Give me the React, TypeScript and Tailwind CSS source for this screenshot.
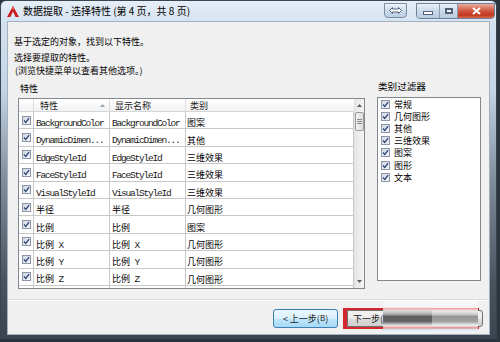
import React from 'react'

const cjk = "font-['Noto_Sans_CJK_SC','Microsoft_YaHei',sans-serif]"
const mono = "font-['Liberation_Mono','Noto_Sans_CJK_SC',monospace]"

const rows: [string, string, string][] = [
  ['BackgroundColor', 'BackgroundColor', '图案'],
  ['DynamicDimen...', 'DynamicDimen...', '其他'],
  ['EdgeStyleId', 'EdgeStyleId', '三维效果'],
  ['FaceStyleId', 'FaceStyleId', '三维效果'],
  ['VisualStyleId', 'VisualStyleId', '三维效果'],
  ['半径', '半径', '几何图形'],
  ['比例', '比例', '图案'],
  ['比例 X', '比例 X', '几何图形'],
  ['比例 Y', '比例 Y', '几何图形'],
  ['比例 Z', '比例 Z', '几何图形'],
  ['', '', ''],
]

const filters = ['常规', '几何图形', '其他', '三维效果', '图案', '图形', '文本']

/** ASCII runs get the narrow mono face, CJK stays full width */
function CellText({ text }: { text: string }) {
  const parts = text.split(/([\x20-\x7e]+)/).filter(Boolean)
  return (
    <span className="whitespace-pre leading-none">
      {parts.map((p, i) =>
        /^[\x20-\x7e]+$/.test(p) ? (
          <span key={i} className={`${mono} text-[9.5px] tracking-[-1.2px] text-[#1a1a1a]`}>
            {p}
          </span>
        ) : (
          <span key={i} className={`${cjk} text-[9px]`}>
            {p}
          </span>
        )
      )}
    </span>
  )
}

function Check() {
  return (
    <span className="inline-flex w-[9px] h-[9px] shrink-0 items-center justify-center border border-[#8c96a8] bg-[linear-gradient(135deg,#cfd8e4,#f3f5f8)]">
      <svg width="7" height="7" viewBox="0 0 7 7">
        <path d="M1 3.6 L2.8 5.4 L6.1 1.1" stroke="#34497a" strokeWidth="1.4" fill="none" />
      </svg>
    </span>
  )
}

function AcadIcon() {
  return (
    <svg width="12" height="11" viewBox="0 0 12 11">
      <polygon points="6,0 12,11 8.6,11 6,5.6 3.4,11 0,11" fill="#c81e1e" />
      <polygon points="6,0 7.2,2.2 6,4.4 4.8,2.2" fill="#e85a4a" />
    </svg>
  )
}

function TitleButtons() {
  return (
    <div className="flex items-start ml-auto -mt-[1px]">
      <div className="w-[23px] h-[15px] mr-[9px] rounded-b-[4px] border border-[#7c8ca3] bg-[linear-gradient(to_bottom,#eef3f9,#cddbeb_50%,#bccfe4)] flex items-center justify-center">
        <svg width="13" height="7" viewBox="0 0 13 7">
          <path
            d="M0.5 3.5 L3.5 0.5 L3.5 2 L9.5 2 L9.5 0.5 L12.5 3.5 L9.5 6.5 L9.5 5 L3.5 5 L3.5 6.5 Z"
            fill="#ffffff"
            stroke="#4a5870"
            strokeWidth="0.9"
            strokeLinejoin="round"
          />
        </svg>
      </div>
      <div className="flex h-[16px] rounded-b-[4px] border border-[#6f7f96] overflow-hidden">
        <div className="w-[23px] bg-[linear-gradient(to_bottom,#eaf1f8,#cbd9ea_50%,#b8cbe0)] flex items-end justify-center pb-[3px] border-r border-[#8c9bb0]">
          <span className="w-[8px] h-[2px] bg-white border border-[#53627a] box-content" />
        </div>
        <div className="w-[18px] bg-[linear-gradient(to_bottom,#eaf1f8,#cbd9ea_50%,#b8cbe0)] flex items-center justify-center border-r border-[#8c9bb0]">
          <span className="w-[8px] h-[6px] border-2 border-[#53627a] bg-white/70" />
        </div>
        <div className="w-[36px] bg-[linear-gradient(to_bottom,#ebab9c,#d0543e_50%,#c1391f_80%,#d96a4c)] flex items-center justify-center">
          <svg width="9" height="8" viewBox="0 0 9 8">
            <path d="M1 1 L8 7 M8 1 L1 7" stroke="#ffffff" strokeWidth="2" />
          </svg>
        </div>
      </div>
    </div>
  )
}

function PropTable() {
  return (
    <div className="w-[347px] h-[191px] border border-[#828790] bg-white flex overflow-hidden">
      <div className="w-[335px] flex flex-col">
        {/* header */}
        <div className="flex h-[13px] shrink-0 border-b border-[#d5d5d5] bg-[linear-gradient(to_bottom,#ffffff,#f1f2f4)] text-[#1e1e1e]">
          <div className="w-[15px] border-r border-[#dcdcdc]" />
          <div className={`w-[76px] border-r border-[#dcdcdc] flex items-center pl-[6px] ${cjk} text-[9px] leading-none`}>
            <span>特性</span>
            <svg className="ml-auto mr-[4px]" width="5" height="3" viewBox="0 0 5 3">
              <polygon points="2.5,0 5,3 0,3" fill="#9aa3b0" />
            </svg>
          </div>
          <div className={`w-[76px] border-r border-[#dcdcdc] flex items-center pl-[5px] ${cjk} text-[9px] leading-none`}>
            显示名称
          </div>
          <div className={`w-[168px] flex items-center pl-[4px] ${cjk} text-[9px] leading-none`}>类别</div>
        </div>
        {rows.map((r, i) => (
          <div key={i} className="flex h-[17.4px] shrink-0 border-b border-[#c8c8c8] text-black">
            <div className="w-[15px] border-r border-[#c8c8c8] flex items-center justify-center">
              {r[0] && <Check />}
            </div>
            <div className="w-[76px] border-r border-[#c8c8c8] flex items-center pl-[2px] whitespace-nowrap overflow-hidden">
              <CellText text={r[0]} />
            </div>
            <div className="w-[76px] border-r border-[#c8c8c8] flex items-center pl-[2px] whitespace-nowrap overflow-hidden">
              <CellText text={r[1]} />
            </div>
            <div className="w-[168px] border-r border-[#c8c8c8] flex items-center pl-[1px]">
              <CellText text={r[2]} />
            </div>
          </div>
        ))}
      </div>
      {/* scrollbar */}
      <div className="w-[11px] flex flex-col bg-[linear-gradient(to_right,#e6e6e6,#f4f4f4)] border-l border-[#e2e2e2]">
        <div className="h-[13px] flex items-center justify-center">
          <svg width="5" height="3" viewBox="0 0 5 3">
            <polygon points="2.5,0 5,3 0,3" fill="#5a5a5a" />
          </svg>
        </div>
        <div className="h-[19px] rounded-[2px] border border-[#9c9c9c] bg-[linear-gradient(to_right,#f4f4f4,#dcdcdc)] flex flex-col items-center justify-center gap-[1px]">
          <span className="w-[5px] h-px bg-[#8a8a8a]" />
          <span className="w-[5px] h-px bg-[#8a8a8a]" />
          <span className="w-[5px] h-px bg-[#8a8a8a]" />
        </div>
        <div className="mt-auto h-[13px] flex items-center justify-center">
          <svg width="5" height="3" viewBox="0 0 5 3">
            <polygon points="0,0 5,0 2.5,3" fill="#5a5a5a" />
          </svg>
        </div>
      </div>
    </div>
  )
}

function FilterBox() {
  return (
    <div className="w-[104px] h-[184px] border border-[#828790] bg-white">
      {filters.map((f) => (
        <div key={f} className="flex items-center h-[12.2px] pl-[3px] gap-[4px]">
          <Check />
          <span className={`${cjk} text-[9px] leading-none text-black`}>{f}</span>
        </div>
      ))}
    </div>
  )
}

export default function App() {
  return (
    <div className="w-[500px] h-[342px] bg-[#2c343d] overflow-hidden">
      <div className="w-[497px] h-[339px] rounded-t-[6px] border border-[#3b4654] px-[6px] pb-[3px] flex flex-col bg-[linear-gradient(to_bottom,#e6eef7_0px,#d4e2f0_22px,#c4d4e5_90px,#7f8c9a_180px,#4a545f_280px,#3b444e_339px)]">
        {/* title bar */}
        <div className="h-[20px] flex items-center -mx-[5px] pl-[5px]">
          <AcadIcon />
          <span className={`ml-[4px] ${cjk} text-[10px] leading-none text-black`}>
            数据提取 - 选择特性 (第 4 页，共 8 页)
          </span>
          <TitleButtons />
        </div>

        {/* client area */}
        <div className="h-[314px] border border-[#a3b0bf] bg-[#f0f0f0] flex flex-col">
          <div className={`pl-[6px] pt-[14px] ${cjk} text-[9px] text-black`}>
            <div className="h-[12px] leading-[12px]">基于选定的对象，找到以下特性。</div>
            <div className="mt-[3px] leading-[13px]">
              <div>选择要提取的特性。</div>
              <div className="pl-[1px]">(浏览快捷菜单以查看其他选项。)</div>
            </div>
          </div>

          <div className="flex mt-[5px] ml-[10px] gap-[12px]">
            <div className="flex flex-col">
              <div className={`h-[13px] leading-[13px] pl-[2px] ${cjk} text-[9px] text-black`}>特性</div>
              <div className="mt-[3px]">
                <PropTable />
              </div>
            </div>
            <div className="flex flex-col -mt-[2px]">
              <div className={`h-[13px] leading-[13px] pl-[1px] ${cjk} text-[9.6px] text-black`}>类别过滤器</div>
              <div className="mt-[4px]">
                <FilterBox />
              </div>
            </div>
          </div>

          <div className="mt-[10px] h-[2px] border-t border-[#dadada] border-b border-b-white" />

          {/* buttons */}
          <div className="flex-1 flex items-center justify-end pr-[6px] gap-[5px] pt-[1px]">
            <button
              className={`w-[65px] h-[19px] rounded-[3px] border border-[#3c7fb1] bg-[linear-gradient(to_bottom,#eaf6fd,#d9f0fc_50%,#bee6fd_51%,#a7d9f5)] ${cjk} text-[9px] leading-none text-[#1a1a1a] flex items-center justify-center`}
            >
              &lt; 上一步(<span className="text-[8px]">B</span>)
            </button>
            <div className="relative w-[140px] h-[21px] flex">
              <div className="absolute left-0 top-0 w-[136px] h-full border-l-[4px] border-y-[2px] border-[#d4262e]" />
              <div
                className={`ml-[4px] my-[2px] flex-1 rounded-r-[3px] border border-[#707070] bg-[linear-gradient(to_bottom,#f2f2f2,#ebebeb_50%,#dddddd_51%,#cfcfcf)] ${cjk} text-[9px] leading-none text-[#1a1a1a] flex items-center pl-[5px]`}
              >
                下一步(
              </div>
              {/* smeared overlay over the rest of the button */}
              <div className="absolute left-[40px] -top-[7px] w-[49px] h-[31px] bg-[linear-gradient(to_bottom,rgba(246,246,246,0.95)_0%,rgba(246,246,246,0.9)_20%,rgba(255,190,190,0.85)_24%,rgba(225,225,225,0.95)_30%,rgba(170,170,170,1)_43%,rgba(95,95,95,1)_50%,rgba(100,100,100,1)_66%,rgba(180,180,180,1)_74%,rgba(235,235,235,0.95)_80%,rgba(250,170,170,0.85)_86%,rgba(200,225,240,0.9)_92%,rgba(246,246,246,0.95)_100%)]" />
              <div className="absolute left-[89px] -top-[7px] w-[46px] h-[31px] bg-[linear-gradient(to_bottom,rgba(248,248,248,0.9)_0%,rgba(248,248,248,0.85)_20%,rgba(255,200,200,0.75)_24%,rgba(238,238,238,0.9)_30%,rgba(205,205,205,1)_43%,rgba(150,150,150,1)_50%,rgba(160,160,160,1)_66%,rgba(215,215,215,1)_74%,rgba(242,242,242,0.9)_80%,rgba(250,185,185,0.75)_86%,rgba(210,230,245,0.85)_92%,rgba(248,248,248,0.9)_100%)]" />
            </div>
          </div>
        </div>
      </div>
    </div>
  )
}
